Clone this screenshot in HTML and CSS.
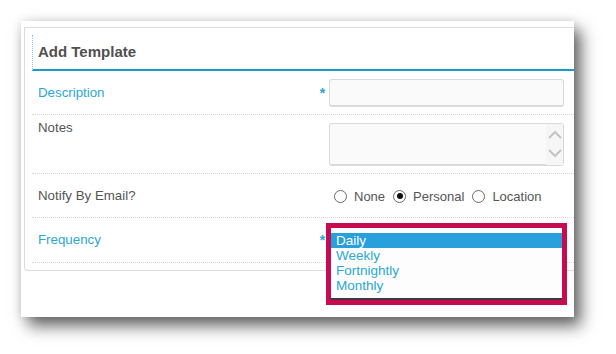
FILE: index.html
```html
<!DOCTYPE html>
<html lang="en">
<head>
    <meta charset="UTF-8">
    <meta name="viewport" content="width=device-width, initial-scale=1.0">
    <title>Add Template</title>
    <link rel="stylesheet" href="styles.css">
</head>
<body>
    <div class="shot">
        <div class="panel">
            <div class="panel-head">Add Template</div>

            <div class="row">
                <label class="label req">Description</label>
                <span class="star">*</span>
                <div class="field"><div class="input"></div></div>
            </div>

            <div class="row">
                <label class="label top">Notes</label>
                <span class="star"></span>
                <div class="field">
                    <div class="textarea">
                        <svg class="spin" width="17" height="41" viewBox="0 0 17 41">
                            <polyline points="3,14 9,8 15,14" fill="none" stroke="#c4c4c4" stroke-width="2"/>
                            <polyline points="3,26 9,32 15,26" fill="none" stroke="#c4c4c4" stroke-width="2"/>
                        </svg>
                    </div>
                </div>
            </div>

            <div class="row">
                <label class="label">Notify By Email?</label>
                <span class="star"></span>
                <div class="field radios">
                    <span class="opt"><span class="dot"></span>None</span>
                    <span class="opt"><span class="dot on"></span>Personal</span>
                    <span class="opt"><span class="dot"></span>Location</span>
                </div>
            </div>

            <div class="row last">
                <label class="label req">Frequency</label>
                <span class="star">*</span>
                <div class="field freq">
                    <!-- opened select, outlined -->
                    <div class="dropdown">
                        <div class="listbox">
                            <div class="item sel">Daily</div>
                            <div class="item">Weekly</div>
                            <div class="item">Fortnightly</div>
                            <div class="item">Monthly</div>
                        </div>
                    </div>
                </div>
            </div>
        </div>
    </div>
</body>
</html>
```

FILE: styles.css
```css
html {
    background: #fff;
}
body {
    margin: 0;
    padding: 21px 0 0 21px;
    height: 354px;
    box-sizing: border-box;
    overflow: hidden;
    font-family: "Liberation Sans", Arial, sans-serif;
}
.shot {
    width: 553px;
    height: 296px;
    padding: 6px 0 0 3px;
    box-sizing: border-box;
    background: #fff;
    overflow: hidden;
    box-shadow: 7px 9px 15px rgba(0, 0, 0, 0.6), 0 0 10px rgba(0, 0, 0, 0.12);
}
.panel {
    width: 600px;
    border: 1px solid #dcdcdc;
    border-right: 0;
    border-radius: 0 0 0 4px;
    padding: 0 0 7px 7px;
}
.panel-head {
    margin-top: 7px;
    height: 34px;
    line-height: 34px;
    padding-left: 5px;
    border-left: 1px dotted #7fcbe3;
    border-bottom: 2px solid #1a9cc7;
    font-size: 15px;
    font-weight: bold;
    color: #505050;
}
.row {
    display: grid;
    grid-template-columns: 278px 13px 235px;
    padding: 8px 0 7px 6px;
    border-bottom: 1px dotted #d6d6d6;
}
.row.last {
    padding-bottom: 8px;
}
.label {
    font-size: 13.3px;
    line-height: 28px;
    color: #555;
}
.label.req {
    color: #2aa8d4;
}
.label.top {
    line-height: 14px;
    margin-top: -2px;
}
.star {
    font-size: 14px;
    font-weight: bold;
    line-height: 28px;
    text-align: center;
    color: #2aa8d4;
}
.input, .textarea {
    box-sizing: border-box;
    border: 1px solid #dadada;
    border-bottom-width: 2px;
    border-radius: 3px;
    background: #fafafa;
}
.input {
    height: 28px;
}
.textarea {
    height: 43px;
    display: flex;
    justify-content: flex-end;
}
.spin {
    background: #f6f6f6;
}
.radios {
    display: flex;
    align-items: center;
    padding-left: 5px;
    font-size: 13px;
    color: #555;
}
.opt {
    display: flex;
    align-items: center;
    gap: 7px;
    margin-right: 8px;
}
.dot {
    width: 13px;
    height: 13px;
    box-sizing: border-box;
    border: 1px solid #6a6a6a;
    border-radius: 50%;
    background: #fff;
    display: flex;
    align-items: center;
    justify-content: center;
}
.dot.on::after {
    content: "";
    width: 6px;
    height: 6px;
    border-radius: 50%;
    background: #111;
}
.freq {
    position: relative;
}
.dropdown {
    position: absolute;
    top: -3px;
    left: -3px;
    width: 241px;
    box-sizing: border-box;
    border: 5px solid #c80a50;
    background: #fff;
}
.listbox {
    padding: 5px 0;
    border-bottom: 2px solid #3a3a3a;
    background: #fdfdfd;
}
.item {
    font-size: 13.5px;
    line-height: 15px;
    padding-left: 5px;
    color: #2aa8d4;
}
.item.sel {
    background: #27a0db;
    color: #fff;
}
```
